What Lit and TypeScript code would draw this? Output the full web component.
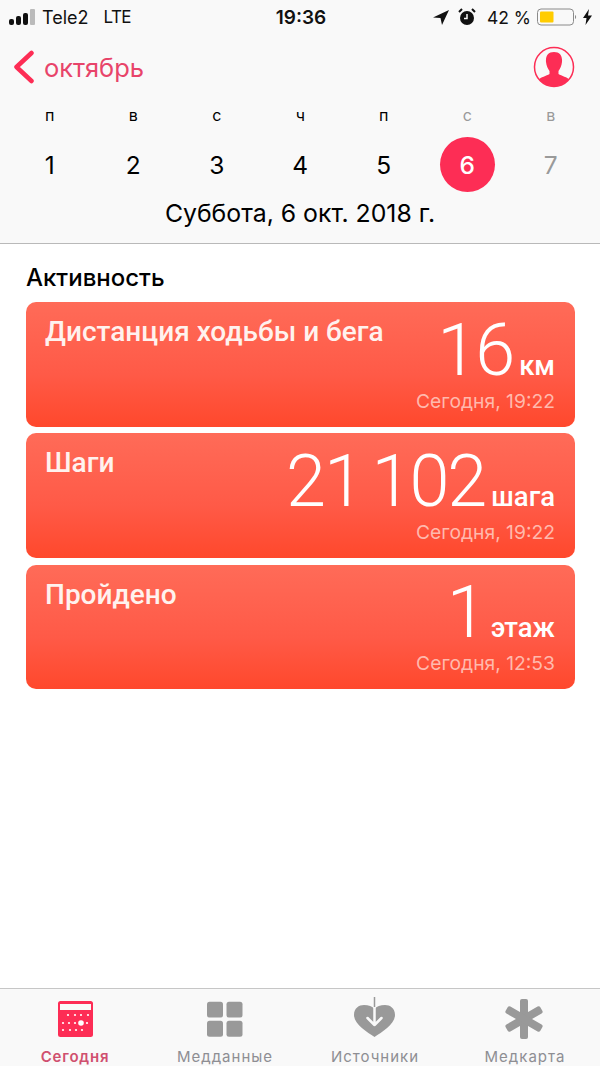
import { LitElement, html, css, svg } from 'lit';
import { customElement } from 'lit/decorators.js';

const WEEK = [
  { letter: 'п', day: '1' },
  { letter: 'в', day: '2' },
  { letter: 'с', day: '3' },
  { letter: 'ч', day: '4' },
  { letter: 'п', day: '5' },
  { letter: 'с', day: '6', off: true, selected: true },
  { letter: 'в', day: '7', off: true },
];

const CARDS = [
  { title: 'Дистанция ходьбы и бега', value: '16', unit: 'км', time: 'Сегодня, 19:22' },
  { title: 'Шаги', value: '21 102', unit: 'шага', time: 'Сегодня, 19:22' },
  { title: 'Пройдено', value: '1', unit: 'этаж', time: 'Сегодня, 12:53' },
];

const calendarDots = () => {
  const rows = [
    { y: 16, xs: [13, 20, 26, 33] },
    { y: 24, xs: [8, 14, 20, 32] },
    { y: 31, xs: [8, 15, 21, 27] },
  ];
  return rows.flatMap((r) =>
    r.xs.map((x) => svg`<circle cx=${x} cy=${r.y} r="1.100" fill="#fff" />`),
  );
};

const TABS = [
  {
    label: 'Сегодня',
    active: true,
    icon: svg`<rect x="3" y="2" width="35" height="36" rx="2.500" fill="#fd2d55"/>
      <rect x="5" y="5" width="31" height="6" fill="#f9f9f9"/>
      ${calendarDots()}<circle cx="26" cy="24" r="2.800" fill="#fff"/>`,
  },
  {
    label: 'Медданные',
    icon: svg`<rect x="2" y="2.700" width="16" height="15.800" rx="2.500"/><rect x="21.500" y="2.700" width="16" height="15.800" rx="2.500"/><rect x="2" y="21.700" width="16" height="16" rx="2.500"/><rect x="21.500" y="21.700" width="16" height="16" rx="2.500"/>`,
  },
  {
    label: 'Источники',
    icon: svg`<path d="M19.500 38 C12 33 -1 25 -1 16 C-1 9 4 6 9 6 C13.500 6 17.500 7.500 19.500 10 C21.500 7.500 25.500 6 30 6 C35 6 40 9 40 16 C40 25 27 33 19.500 38z"/>
      <path d="M19.500 9V26M12.500 19l7 7 7-7" fill="none" stroke="#f9f9f9" stroke-width="2.500" stroke-linecap="round" stroke-linejoin="round"/>
      <path d="M19.500 -2V8" stroke="#999" stroke-width="1.500" fill="none"/>`,
  },
  {
    label: 'Медкарта',
    icon: svg`<rect x="15" y="0" width="8" height="40" rx="2"/>
      <rect x="15" y="0" width="8" height="40" rx="2" transform="rotate(60 19 20)"/>
      <rect x="15" y="0" width="8" height="40" rx="2" transform="rotate(-60 19 20)"/>`,
  },
];

@customElement('app-root')
export class AppRoot extends LitElement {
  static styles = css`
    :host {
      display: block;
      width: 600px;
      height: 1066px;
      font-family: 'Inter', 'Roboto', sans-serif;
      color: #000;
      background: #fff;
    }
    .page {
      height: 1066px;
      display: flex;
      flex-direction: column;
    }
    .top {
      background: #f9f9f9;
      border-bottom: 1px solid #b9b9b9;
      height: 244px;
      box-sizing: border-box;
    }
    .status {
      height: 34px;
      display: flex;
      align-items: center;
      padding: 0 8px 0 9px;
      color: #111;
      position: relative;
    }
    .carrier {
      display: flex;
      align-items: center;
      gap: 6px;
      font-size: 18px;
    }
    .carrier .net {
      margin-left: 9px;
      font-size: 17px;
      letter-spacing: -0.6px;
    }
    .clock {
      position: absolute;
      left: 2px;
      right: 0;
      text-align: center;
      font-weight: 600;
      font-size: 19px;
    }
    .status-right {
      margin-left: auto;
      display: flex;
      align-items: center;
      gap: 6px;
      font-size: 17.500px;
    }
    .loc {
      margin-right: 3px;
    }
    .alarm {
      margin-right: 5px;
    }
    .nav {
      height: 66px;
      display: flex;
      align-items: center;
      padding: 0 25px 0 14px;
      color: #e8446a;
      font-size: 25.500px;
      gap: 9px;
    }
    .nav .avatar {
      margin-left: auto;
    }
    .week {
      display: grid;
      grid-template-columns: repeat(7, 83.500px);
      padding-left: 8px;
    }
    .cell {
      display: flex;
      flex-direction: column;
      align-items: center;
    }
    .letter {
      font-size: 16px;
      height: 24px;
      line-height: 24px;
      margin-top: 3px;
    }
    .day {
      width: 55px;
      height: 55px;
      margin-top: 10px;
      border-radius: 50%;
      display: flex;
      align-items: center;
      justify-content: center;
      font-size: 24.500px;
    }
    .off {
      color: #9a9a9a;
    }
    .selected {
      background: #fd2d55;
      color: #fff;
      font-weight: 500;
    }
    .date {
      text-align: center;
      font-size: 24.800px;
      line-height: 30px;
      margin-top: 6px;
    }
    main {
      flex: 1;
      padding: 0 25px 0 26px;
    }
    h2 {
      margin: 20px 0 10px;
      font-size: 24px;
      line-height: 28px;
      font-weight: 500;
    }
    .cards {
      display: flex;
      flex-direction: column;
      gap: 6px;
    }
    .card {
      height: 125px;
      box-sizing: border-box;
      border-radius: 10px;
      background: linear-gradient(#ff6b58, #ff5a47 58%, #ff482c);
      color: #fff;
      display: flex;
      justify-content: space-between;
      padding: 13px 20px 14px 19px;
    }
    .card:last-child {
      height: 124px;
      margin-top: 1px;
    }
    .title {
      font-family: 'Roboto', sans-serif;
      font-size: 28px;
      font-weight: 500;
      line-height: 34px;
      color: #fff2ee;
    }
    .right {
      display: flex;
      flex-direction: column;
      align-items: flex-end;
      justify-content: flex-end;
    }
    .reading {
      display: flex;
      align-items: baseline;
      gap: 6px;
    }
    .value {
      font-family: 'Roboto', sans-serif;
      font-size: 72px;
      font-weight: 300;
      line-height: 76px;
      letter-spacing: -2px;
      word-spacing: -6px;
    }
    .unit {
      font-family: 'Roboto', sans-serif;
      font-size: 27.500px;
      font-weight: 500;
    }
    .time {
      font-size: 19.300px;
      line-height: 24px;
      color: #ffb9ad;
    }
    .tabs {
      height: 77px;
      background: #f9f9f9;
      border-top: 1px solid #c6c6c6;
      display: grid;
      grid-template-columns: repeat(4, 150px);
    }
    .tab {
      display: flex;
      flex-direction: column;
      align-items: center;
      color: #8e8e93;
      font-size: 15px;
      letter-spacing: 1px;
      padding-top: 10px;
      fill: #999;
    }
    .tab svg {
      display: block;
      margin-bottom: 8px;
      overflow: visible;
    }
    .tab.active {
      color: #d0506f;
      font-weight: 600;
      letter-spacing: 0.8px;
    }
  `;

  render() {
    return html`
      <div class="page">
        <div class="top">
          <div class="status">
            <div class="carrier">
              <svg width="27" height="16" viewBox="0 0 27 16">
                <rect x="0" y="10" width="5" height="6" rx="2" fill="#111" />
                <rect x="7" y="7" width="5" height="9" rx="2" fill="#111" />
                <rect x="14" y="4" width="5" height="12" rx="2" fill="#111" />
                <rect x="21" y="0" width="5" height="16" rx="1" fill="#bbb" />
              </svg>
              <span>Tele2</span><span class="net">LTE</span>
            </div>
            <div class="clock">19:36</div>
            <div class="status-right">
              <svg class="loc" width="16" height="16" viewBox="0 0 16 16">
                <path d="M16 1L0 8.500l7.500 .5L9 16z" fill="#111" />
              </svg>
              <svg class="alarm" width="18" height="18" viewBox="0 0 18 18">
                <circle cx="9" cy="10" r="7" fill="#111" />
                <path d="M9 6v4.500H6" stroke="#f9f9f9" stroke-width="1.500" fill="none" />
                <path d="M1 4l3-3M17 4l-3-3" stroke="#111" stroke-width="2" />
              </svg>
              <span>42 %</span>
              <svg width="40" height="18" viewBox="0 0 40 18">
                <rect x=".5" y="1" width="36" height="16" rx="3.500" fill="none" stroke="#8a8a8a" />
                <rect x="3" y="3.500" width="13.500" height="11" rx="1" fill="#fc0" />
                <path d="M38 7c1.500 .5 1.500 3.500 0 4z" fill="#8a8a8a" />
              </svg>
              <svg width="9" height="16" viewBox="0 0 9 16">
                <path d="M6 0L0 9h3.500L2.500 16 9 6.500H5z" fill="#111" />
              </svg>
            </div>
          </div>
          <div class="nav">
            <svg width="21" height="34" viewBox="0 0 21 34">
              <path d="M17.500 3L2.500 17l15 14" fill="none" stroke="#fd2d55" stroke-width="4.500" stroke-linecap="round" stroke-linejoin="round" />
            </svg>
            <span>октябрь</span>
            <svg class="avatar" width="42" height="42" viewBox="0 0 42 42">
              <defs><clipPath id="c"><circle cx="21" cy="21" r="19.500" /></clipPath></defs>
              <circle cx="21" cy="21" r="19.500" fill="#f9f9f9" stroke="#fd2d55" stroke-width="1.500" />
              <path clip-path="url(#c)" d="M21 6c6 0 8.500 4 8 10-.4 4-2 7-3.500 9v3c3 2 9 3 11 6v8H5.500v-8c2-3 8-4 11-6v-3c-1.500-2-3.100-5-3.500-9-.5-6 2-10 8-10z" fill="#fd2d55" />
            </svg>
          </div>
          <div class="week">
            ${WEEK.map(
              (d) => html`<div class="cell">
                <div class="letter ${d.off ? 'off' : ''}">${d.letter}</div>
                <div class="day ${d.off ? 'off' : ''} ${d.selected ? 'selected' : ''}">${d.day}</div>
              </div>`,
            )}
          </div>
          <div class="date">Суббота, 6 окт. 2018 г.</div>
        </div>
        <main>
          <h2>Активность</h2>
          <div class="cards">
            ${CARDS.map(
              (c) => html`<div class="card">
                <div class="title">${c.title}</div>
                <div class="right">
                  <div class="reading">
                    <span class="value">${c.value}</span><span class="unit">${c.unit}</span>
                  </div>
                  <div class="time">${c.time}</div>
                </div>
              </div>`,
            )}
          </div>
        </main>
        <div class="tabs">
          ${TABS.map(
            (t) => html`<div class="tab ${t.active ? 'active' : ''}">
              <svg width="40" height="40" viewBox="0 0 40 40">${t.icon}</svg>
              <span>${t.label}</span>
            </div>`,
          )}
        </div>
      </div>
    `;
  }
}
